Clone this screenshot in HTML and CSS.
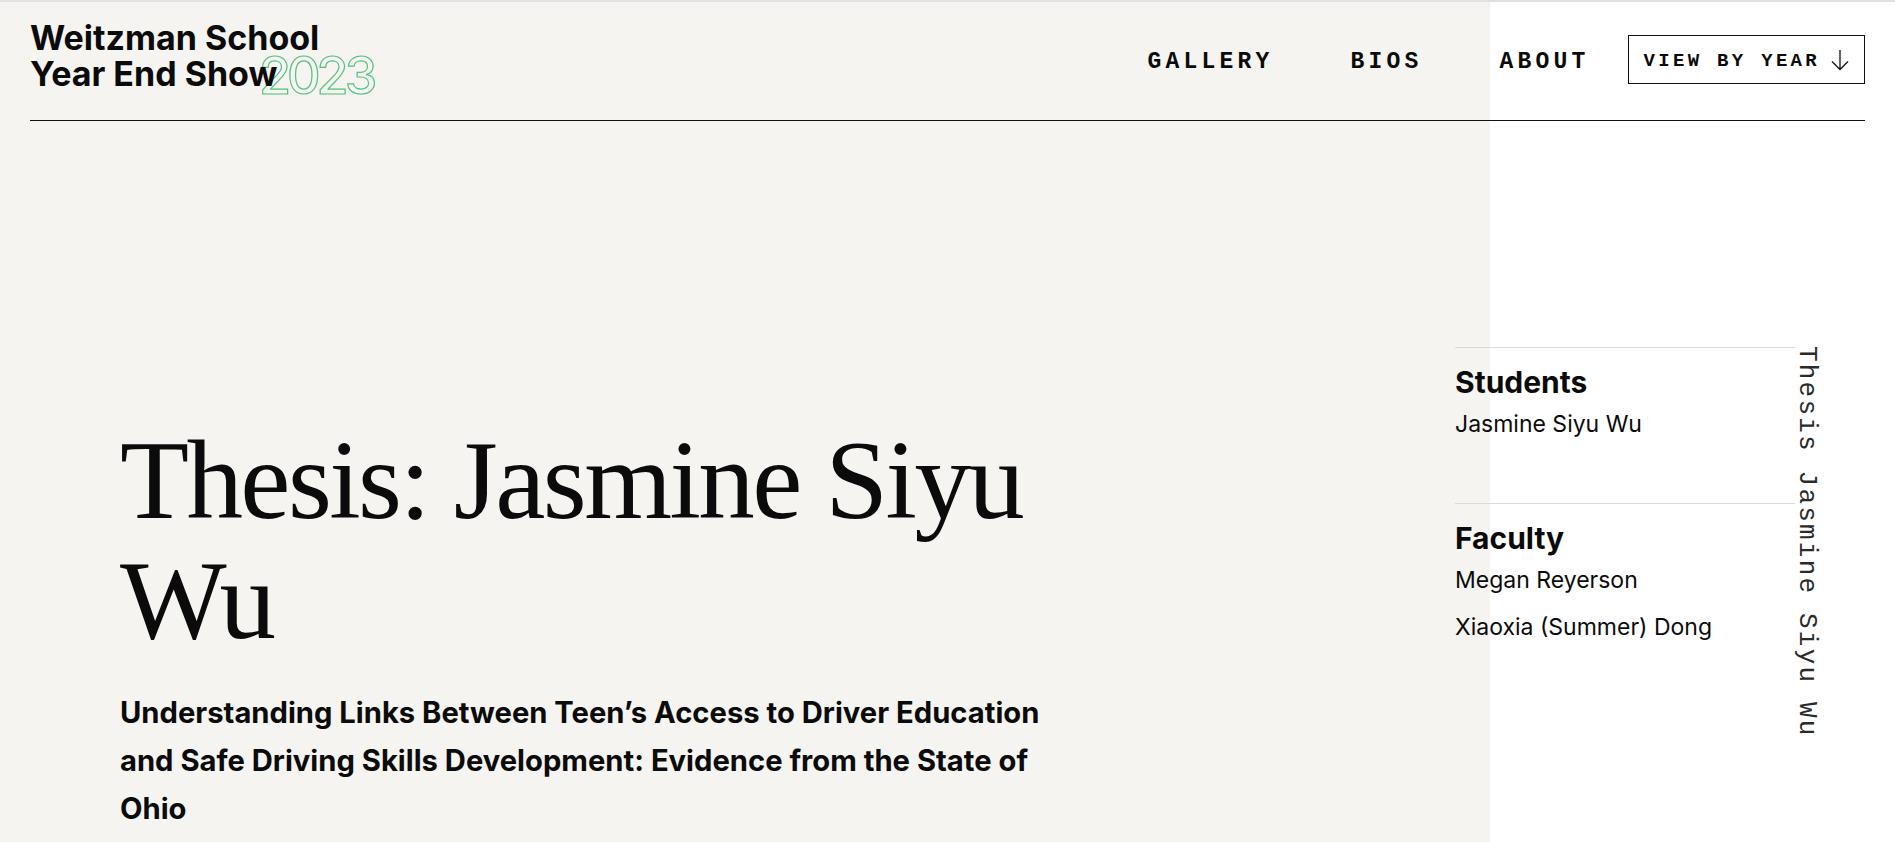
FILE: index.html
```html
<!DOCTYPE html>
<html lang="en">
<head>
<meta charset="utf-8">
<title>Thesis: Jasmine Siyu Wu — Weitzman School Year End Show 2023</title>
<link rel="stylesheet" href="styles.css">
</head>
<body>
<div class="page">
  <header class="site-header">
    <a class="logo" href="#">
      <span class="logo-line">Weitzman School</span>
      <span class="logo-line">Year End Show</span>
      <span class="logo-year">2023</span>
    </a>
    <nav class="main-nav">
      <a class="nav-link" href="#">GALLERY</a>
      <a class="nav-link" href="#">BIOS</a>
      <a class="nav-link nav-link-last" href="#">ABOUT</a>
      <button class="year-btn" type="button">
        <span class="year-btn-label">VIEW BY YEAR</span>
        <svg class="year-arrow" width="20" height="22" viewBox="0 0 20 22" aria-hidden="true">
          <path d="M10 1 V20.5 M2 12.5 L10 20.5 L18 12.5" fill="none" stroke="#111" stroke-width="1.3"/>
        </svg>
      </button>
    </nav>
  </header>

  <main class="project">
    <section class="project-intro">
      <h1 class="project-title">Thesis: Jasmine Siyu Wu</h1>
      <p class="project-subtitle">Understanding Links Between Teen’s Access to Driver Education and Safe Driving Skills Development: Evidence from the State of Ohio</p>
    </section>

    <aside class="credits">
      <div class="credit-group">
        <h2 class="credit-title">Students</h2>
        <ul class="credit-list">
          <li>Jasmine Siyu Wu</li>
        </ul>
      </div>
      <div class="credit-group">
        <h2 class="credit-title">Faculty</h2>
        <ul class="credit-list">
          <li>Megan Reyerson</li>
          <li>Xiaoxia (Summer) Dong</li>
        </ul>
      </div>
    </aside>

    <div class="vertical-label">Thesis Jasmine Siyu Wu</div>
  </main>
</div>
</body>
</html>
```

FILE: styles.css
```css
* {
  box-sizing: border-box;
}

html,
body {
  margin: 0;
  padding: 0;
}

body {
  font-family: Inter, "Liberation Sans", sans-serif;
  color: #0b0b0b;
  background: #ffffff;
}

.page {
  min-height: 842px;
  border-top: 2px solid #dfe1e2;
  background: linear-gradient(to right, #f5f4f0 1490px, #ffffff 1490px);
}

/* ---------- header ---------- */

.site-header {
  display: flex;
  justify-content: space-between;
  align-items: flex-start;
  margin: 0 30px;
  padding: 18px 0 28px;
  border-bottom: 1px solid #111111;
}

.logo {
  position: relative;
  display: flex;
  flex-direction: column;
  color: #0b0b0b;
  text-decoration: none;
  font-weight: 700;
  font-size: 34px;
  line-height: 36px;
  letter-spacing: 0;
}

.logo-line {
  position: relative;
  z-index: 1;
}

.logo-year {
  position: absolute;
  left: 229px;
  top: 30px;
  font-size: 52px;
  font-weight: 500;
  line-height: 1;
  letter-spacing: -4px;
  color: transparent;
  -webkit-text-stroke: 1.2px #55c27e;
}

.main-nav {
  display: flex;
  align-items: center;
  margin-top: 15px;
}

.nav-link {
  padding-top: 4px;
  font-family: "Liberation Mono", monospace;
  font-weight: 700;
  font-size: 23px;
  letter-spacing: 4.2px;
  color: #0b0b0b;
  text-decoration: none;
  margin-right: 77px;
}

.nav-link-last {
  margin-right: 38px;
}

.year-btn {
  display: flex;
  align-items: center;
  gap: 10px;
  height: 49px;
  padding: 0 14px 0 15px;
  border: 1px solid #111111;
  background: transparent;
  color: #0b0b0b;
  font-family: "Liberation Mono", monospace;
  font-weight: 700;
  font-size: 19px;
  letter-spacing: 3.3px;
  cursor: pointer;
}

.year-btn-label {
  padding-top: 2px;
}

.year-arrow {
  display: block;
}

/* ---------- main ---------- */

.project {
  display: flex;
  align-items: flex-start;
  padding: 0 76px 0 120px;
}

.project-intro {
  width: 940px;
  padding-top: 299px;
}

.project-title {
  margin: 0;
  font-family: "Liberation Serif", serif;
  font-weight: 400;
  font-size: 113px;
  line-height: 120px;
  letter-spacing: -2.6px;
}

.project-subtitle {
  margin: 29px 0 0;
  font-size: 29.2px;
  font-weight: 700;
  line-height: 48px;
}

.credits {
  margin-left: auto;
  width: 340px;
  padding-top: 226px;
}

.credit-group {
  border-top: 1px solid #dadada;
  padding: 17px 0 64px;
}

.credit-title {
  margin: 0 0 10px;
  font-size: 30px;
  font-weight: 700;
  line-height: 34px;
}

.credit-list {
  list-style: none;
  margin: 0;
  padding: 0;
  display: flex;
  flex-direction: column;
  gap: 17px;
}

.credit-list li {
  font-size: 23px;
  font-weight: 400;
  line-height: 30px;
}

.vertical-label {
  writing-mode: vertical-rl;
  padding-top: 225px;
  font-family: "Liberation Mono", monospace;
  font-size: 26px;
  letter-spacing: 2.2px;
  line-height: 24px;
  color: #2a2a2a;
  white-space: nowrap;
}
```
